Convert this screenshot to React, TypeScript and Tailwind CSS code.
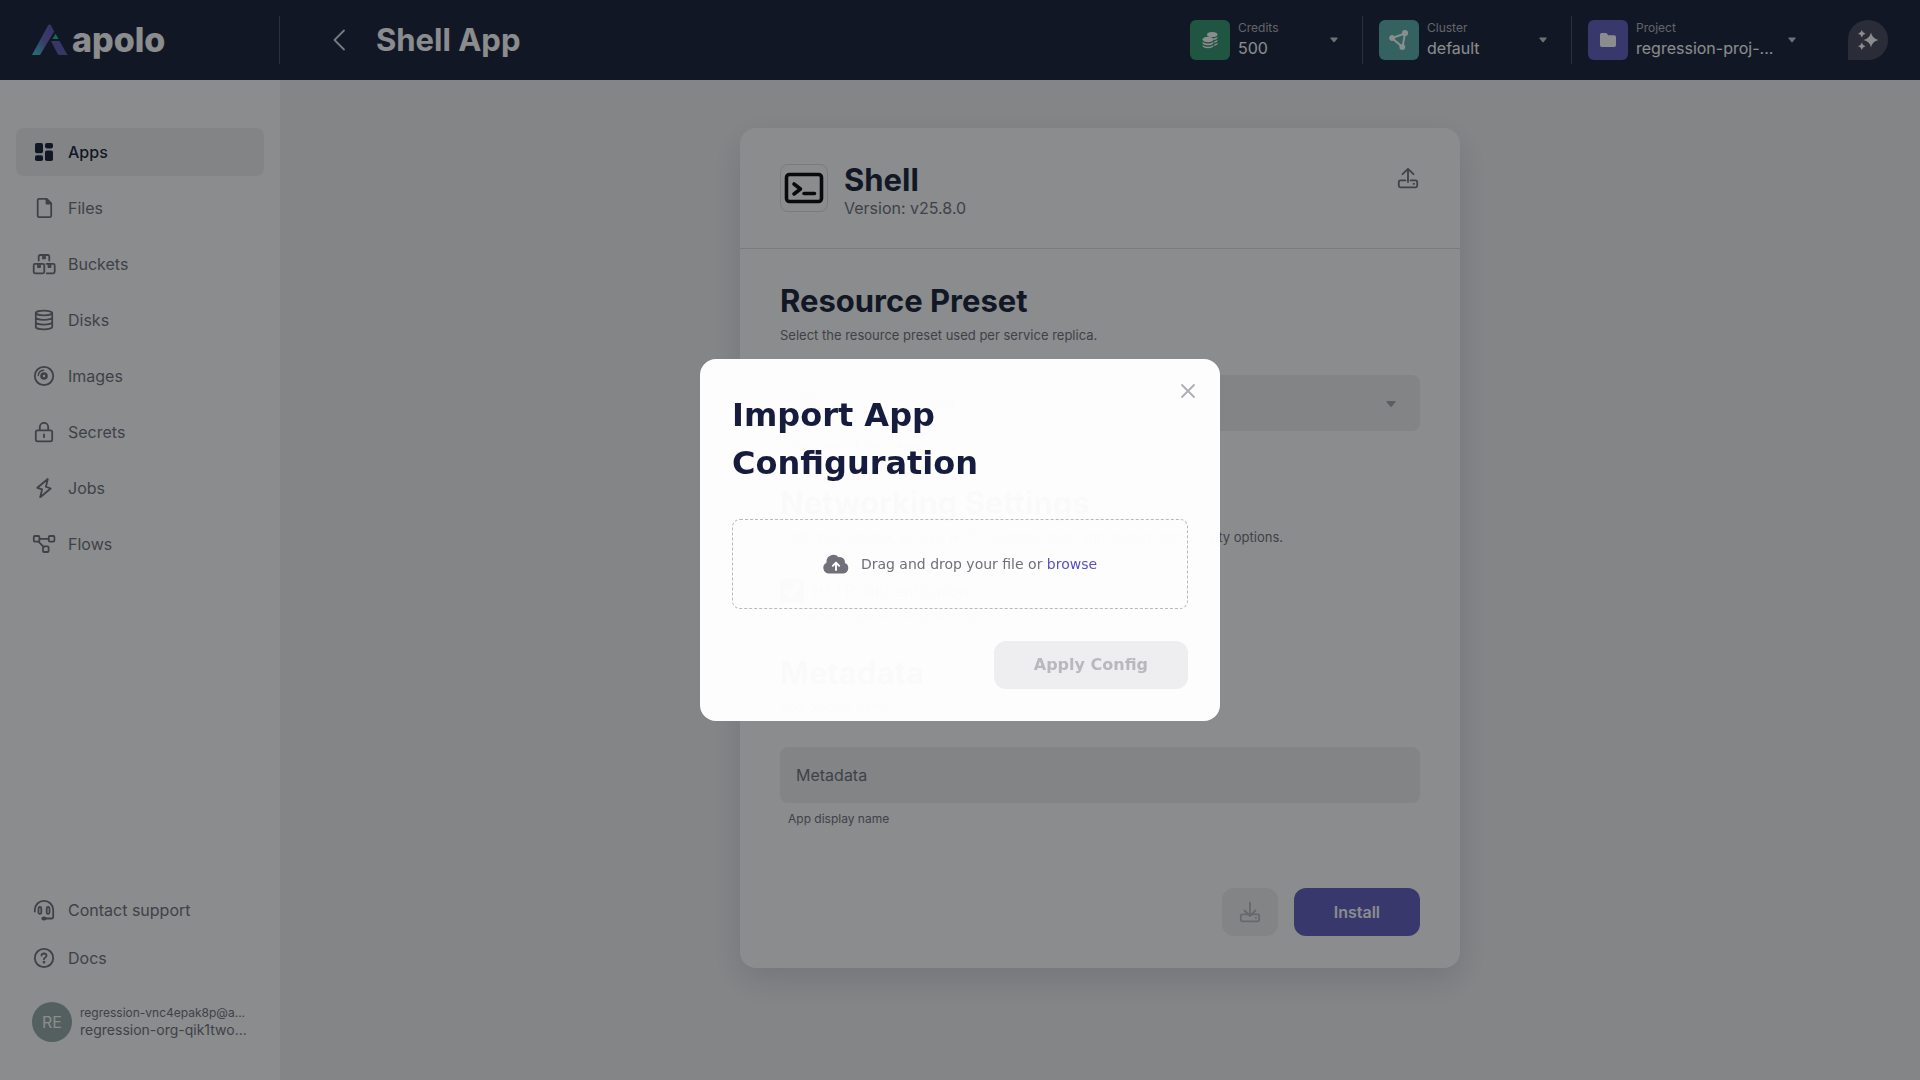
import { ReactNode } from "react";

const stroke = {
  fill: "none",
  stroke: "currentColor",
  strokeWidth: 1.8,
  strokeLinecap: "round" as const,
  strokeLinejoin: "round" as const,
};

function Icon({ children, className = "size-6" }: { children: ReactNode; className?: string }) {
  return (
    <svg viewBox="0 0 24 24" className={`${className} shrink-0`} aria-hidden="true">
      {children}
    </svg>
  );
}

function LogoMark() {
  return (
    <svg viewBox="0 0 36 32" className="h-8 w-9 shrink-0" aria-hidden="true">
      <defs>
        <linearGradient id="logo-left" x1="0.1" y1="1" x2="0.8" y2="0.1">
          <stop offset="0" stopColor="#3fc6cf" />
          <stop offset="0.55" stopColor="#6263b4" />
          <stop offset="1" stopColor="#5f55b4" />
        </linearGradient>
      </defs>
      <path d="M0 31 16 1.6q1.5-2.4 3 0L22.200 7.400 8 31Z" fill="url(#logo-left)" />
      <path d="M19 17h8.500L35.500 31H27.500q-1.300 0-2-1.200Z" fill="#5f55b4" />
      <path d="M23.600 9.800 26.600 15H20.400Z" fill="#17c289" />
    </svg>
  );
}

const nav = [
  {
    label: "Apps",
    icon: (
      <g fill="currentColor">
        <rect x="3" y="3" width="8" height="10.300" rx="1.800" />
        <rect x="3" y="15.200" width="8" height="5.800" rx="1.800" />
        <rect x="13" y="3" width="8" height="5.400" rx="1.800" />
        <rect x="13" y="10.600" width="8" height="10.400" rx="1.800" />
      </g>
    ),
  },
  {
    label: "Files",
    icon: (
      <g {...stroke}>
        <path d="M7.200 2.800h7.300l4.700 4.700v12.200a1.500 1.500 0 0 1-1.500 1.500H7.200a1.500 1.500 0 0 1-1.500-1.500V4.300a1.500 1.500 0 0 1 1.500-1.500Z" />
        <path d="M14.500 3v4.500H19Z" fill="currentColor" />
      </g>
    ),
  },
  {
    label: "Buckets",
    icon: (
      <g {...stroke}>
        <path d="M6.700 8.500V4.500a1.500 1.500 0 0 1 1.500-1.500h7.600a1.500 1.500 0 0 1 1.500 1.500v4M11 3.200v3.200h2V3.200" />
        <rect x="1.700" y="11.800" width="10.600" height="9.500" rx="1.500" />
        <path d="M6 12v3h2V12M14.500 11.800h6.700a1.500 1.500 0 0 1 1.500 1.500v6.500a1.500 1.500 0 0 1-1.500 1.500h-6.500M16.500 12v3h2V12" />
      </g>
    ),
  },
  {
    label: "Disks",
    icon: (
      <g {...stroke}>
        <ellipse cx="12" cy="5" rx="8.200" ry="2.300" />
        <path d="M3.800 5v14c0 1.300 3.700 2.300 8.200 2.300s8.200-1 8.200-2.300V5M3.800 9.600c0 1.300 3.700 2.300 8.200 2.300s8.200-1 8.200-2.300M3.800 14.300c0 1.300 3.700 2.300 8.200 2.300s8.200-1 8.200-2.300" />
      </g>
    ),
  },
  {
    label: "Images",
    icon: (
      <g {...stroke}>
        <circle cx="12" cy="12" r="9.200" />
        <circle cx="12" cy="12" r="2.500" strokeWidth="2.600" />
        <path d="M6.300 11.500a5.700 5.700 0 0 1 5.200-5.200" strokeWidth="1.400" />
      </g>
    ),
  },
  {
    label: "Secrets",
    icon: (
      <g {...stroke}>
        <rect x="3.800" y="10.300" width="16.400" height="11" rx="1.800" />
        <path d="M7.800 10V7a4.200 4.200 0 0 1 8.400 0v3M12 14.500v2.700" />
      </g>
    ),
  },
  {
    label: "Jobs",
    icon: <path {...stroke} d="M15.800 3 5.300 11.800l4.800 1.600L8.200 21.200l10.500-8.700-4.800-1.800Z" />,
  },
  {
    label: "Flows",
    icon: (
      <g {...stroke}>
        <rect x="1.800" y="4" width="5.600" height="5.600" rx="1" />
        <rect x="16.800" y="4" width="5.600" height="5.600" rx="1" />
        <rect x="11" y="14.400" width="5.600" height="5.600" rx="1" />
        <path d="M7.500 6.800h9.200M6.500 9.600l5.300 5.500" />
      </g>
    ),
  },
];

function NavItem({ label, icon, active }: { label: string; icon: ReactNode; active?: boolean }) {
  return (
    <a
      href="#"
      className={
        active
          ? "flex h-12 items-center gap-3 rounded-lg bg-[#f0f0f2] px-4 font-medium text-[#151b35]"
          : "flex h-12 items-center gap-3 rounded-lg px-4 text-[#6e6d78]"
      }
    >
      <Icon>{icon}</Icon>
      {label}
    </a>
  );
}

function Caret({ className }: { className: string }) {
  return (
    <svg viewBox="0 0 10 6" className={className} aria-hidden="true">
      <path d="M1.200 0h7.600q1.200.2.500 1.200L5.800 5.500q-.8.800-1.600 0L.700 1.200Q0 .2 1.200 0Z" fill="currentColor" />
    </svg>
  );
}

function HeaderPicker(props: { label: string; value: string; tile: string; width: string; icon: ReactNode }) {
  return (
    <button type="button" className={`${props.width} flex h-12 items-center gap-2 text-left`}>
      <span className={`${props.tile} flex size-10 shrink-0 items-center justify-center rounded-md text-white`}>
        <Icon>{props.icon}</Icon>
      </span>
      <span className="flex-1 whitespace-nowrap">
        <span className="block text-[12px] leading-4 text-[#b1b1b8]">{props.label}</span>
        <span className="block text-[16px] leading-6 text-white">{props.value}</span>
      </span>
      <Caret className="mr-2 h-[6px] w-2 shrink-0 text-[#c9c9ce]" />
    </button>
  );
}

function Header() {
  return (
    <header className="flex h-20 shrink-0 items-center bg-[#151b35]">
      <div className="flex h-12 w-[280px] shrink-0 items-center border-r border-[#4a4d62] pl-8">
        <a href="#" aria-label="apolo" className="flex items-center gap-1">
          <LogoMark />
          <span className="text-[34px] leading-10 font-extrabold text-white">apolo</span>
        </a>
      </div>
      <button type="button" aria-label="Back" className="ml-12 text-[#dcdce0]">
        <Icon>
          <path d="M16 2.500 6.500 12 16 21.500" {...stroke} />
        </Icon>
      </button>
      <h1 className="ml-6 text-[31px] leading-10 font-bold text-white">Shell App</h1>
      <div className="ml-auto flex items-center gap-4 pr-8">
        <HeaderPicker
          label="Credits"
          value="500"
          tile="bg-[#2f936c]"
          width="w-[156px]"
          icon={
            <g fill="currentColor">
              <ellipse cx="14.200" cy="6.500" rx="5.200" ry="2.600" />
              <path d="M15.500 10.300c2-.2 3.500-.9 4-1.600v1c0 1.200-1.600 2-4 2.200ZM16.300 13.200c1.600-.3 2.800-.9 3.200-1.500v1c0 1-1.300 1.800-3.200 2.100ZM16.300 16.200c1.600-.3 2.800-.9 3.200-1.500v1c0 1-1.300 1.800-3.200 2.100Z" />
              <ellipse cx="10" cy="11.500" rx="5.500" ry="2.800" />
              <path d="M4.500 13.500c1 1.500 3 2 5.500 2s4.500-.5 5.500-2v1.200c0 1.500-2.300 2.600-5.500 2.600s-5.500-1.100-5.500-2.600ZM4.500 16.700c1 1.500 3 2 5.500 2s4.500-.5 5.500-2v1c0 1.500-2.300 2.500-5.500 2.500s-5.500-1-5.500-2.500Z" />
            </g>
          }
        />
        <div className="h-12 w-px bg-[#4a4d62]" />
        <HeaderPicker
          label="Cluster"
          value="default"
          tile="bg-[#56acaa]"
          width="w-[176px]"
          icon={
            <g fill="currentColor" stroke="currentColor" strokeWidth="1.800">
              <path d="M5 10 18 5.500 15.500 19Z" fill="none" strokeWidth="2" />
              <circle cx="5" cy="10" r="2" />
              <circle cx="18" cy="5" r="2.200" />
              <circle cx="15.300" cy="19" r="2" />
            </g>
          }
        />
        <div className="h-12 w-px bg-[#4a4d62]" />
        <HeaderPicker
          label="Project"
          value="regression-proj-..."
          tile="bg-[#605bbe]"
          width="w-[216px]"
          icon={
            <path
              d="M5.500 5h4.200q.7 0 1.200.6l1.300 1.600h6q1.800 0 1.800 1.800v8.200q0 1.800-1.800 1.800H5.800Q4 19 4 17.200V6.500Q4 5 5.500 5Z"
              fill="currentColor"
            />
          }
        />
        <button
          type="button"
          aria-label="Assistant"
          className="ml-7 flex size-10 items-center justify-center rounded-full rounded-bl-sm bg-[#444659] text-white"
        >
          <Icon>
            <path
              fill="currentColor"
              d="M15 4.500q1.300 6.200 7.500 7.500-6.200 1.300-7.500 7.500-1.300-6.200-7.500-7.500 6.200-1.300 7.500-7.500ZM5.800 2q.7 3 3.700 3.700-3 .7-3.700 3.700-.7-3-3.700-3.700Q5.100 5 5.800 2ZM5.800 14.600q.7 3 3.700 3.700-3 .7-3.700 3.700-.7-3-3.700-3.700 3-.7 3.700-3.700Z"
            />
          </Icon>
        </button>
      </div>
    </header>
  );
}

function Sidebar() {
  return (
    <aside className="flex w-[280px] shrink-0 flex-col bg-white px-4 pt-12 pb-[38px]">
      <nav className="flex flex-col gap-2">
        {nav.map((item) => (
          <NavItem key={item.label} label={item.label} icon={item.icon} active={item.label === "Apps"} />
        ))}
      </nav>
      <div className="mt-auto">
        <NavItem
          label="Contact support"
          icon={
            <g {...stroke}>
              <path d="M2.800 13.500V12a9.200 9.200 0 0 1 18.400 0v7a1.500 1.500 0 0 1-1.500 1.500H13" />
              <rect x="6.500" y="9" width="2.800" height="6.800" rx="1.400" />
              <rect x="14.700" y="9" width="2.800" height="6.800" rx="1.400" />
              <ellipse cx="12" cy="20.500" rx="1.800" ry="1" fill="currentColor" />
            </g>
          }
        />
        <NavItem
          label="Docs"
          icon={
            <g {...stroke}>
              <circle cx="12" cy="12" r="9.200" />
              <path d="M9.500 9.500q.2-2 2.500-2t2.500 2q0 1.300-1.300 2-1.200.6-1.200 1.700" />
              <circle cx="12" cy="16.200" r=".5" fill="currentColor" />
            </g>
          }
        />
        <button type="button" className="mt-5 flex w-full items-center gap-2 px-4 text-left text-[#6e6d78]">
          <span className="flex size-10 shrink-0 items-center justify-center rounded-full bg-[#93a9a5] text-[16px] text-white">
            RE
          </span>
          <span className="whitespace-nowrap">
            <span className="block text-[12px] leading-4">regression-vnc4epak8p@a...</span>
            <span className="block text-[14px] leading-[18px]">regression-org-qik1two...</span>
          </span>
        </button>
      </div>
    </aside>
  );
}

function TrayIcon({ down }: { down?: boolean }) {
  return (
    <Icon>
      <g {...stroke}>
        <path d="M9.500 14.300H4.300a1.500 1.500 0 0 0-1.500 1.500v4a1.500 1.500 0 0 0 1.500 1.500h15.400a1.500 1.500 0 0 0 1.500-1.500v-4a1.500 1.500 0 0 0-1.500-1.500h-5.200" />
        <path d={down ? "M12 2.500v13M6.500 10.500 12 16l5.500-5.500" : "M12 16V3M6.500 8.200 12 2.800l5.500 5.400"} />
        <path d="M17.500 17.800h.6" />
      </g>
    </Icon>
  );
}

const h2 = "text-[31px] leading-10 font-bold text-[#151b35]";
const note = "text-[13px] leading-5";

function AppForm() {
  return (
    <form className="w-full max-w-[720px] rounded-2xl bg-white text-[#6e6d78] shadow-[0_12px_32px_rgba(21,27,53,0.14)]">
      <div className="flex items-start gap-4 border-b border-[#dedee2] px-10 py-8">
        <div className="mt-1 flex size-12 items-center justify-center rounded-lg border border-[#dedee2] text-black">
          <svg viewBox="0 0 46 46" className="size-[46px]" aria-hidden="true">
            <g fill="none" stroke="currentColor" strokeWidth="3.600" strokeLinecap="round" strokeLinejoin="round">
              <rect x="5.500" y="9.500" width="35" height="27" rx="3" />
              <path d="M13 19l6.500 5L13 29M23 28.500h10.500" />
            </g>
          </svg>
        </div>
        <div>
          <h2 className={h2}>Shell</h2>
          <p className="text-[16px] leading-4">Version: v25.8.0</p>
        </div>
        <button type="button" aria-label="Import configuration" className="mt-1.5 ml-auto">
          <TrayIcon />
        </button>
      </div>

      <div className="p-10 pt-8 pb-8">
        <section>
          <h2 className={h2}>Resource Preset</h2>
          <p className={`${note} mt-1`}>Select the resource preset used per service replica.</p>
          <div className="relative mt-[30px]">
            <span className="absolute top-4 left-4 text-[#a5a5ad]">
              <Icon>
                <g {...stroke}>
                  <rect x="4.500" y="4.500" width="15" height="15" rx="2" />
                  <rect x="8.500" y="8.500" width="7" height="7" rx="1" />
                  <path d="M8 4V2M12 4V2M16 4V2M8 22v-2M12 22v-2M16 22v-2M4 8H2M4 12H2M4 16H2M22 8h-2M22 12h-2M22 16h-2" />
                </g>
              </Icon>
            </span>
            <select
              aria-label="Resource Preset"
              className="h-14 w-full appearance-none rounded-lg bg-[#f0f0f2] pr-12 pl-[52px] text-[16px] text-[#a5a5ad]"
            >
              <option>Resource Preset*</option>
            </select>
            <Caret className="absolute top-[26px] right-6 h-[6px] w-[10px] text-[#a5a5ad]" />
          </div>
          <p className="mt-1.5 pl-2 text-[12px] leading-5">The name of the preset.</p>
        </section>

        <section className="mt-[26px]">
          <h2 className={h2}>Networking Settings</h2>
          <p className={`${note} mt-1`}>
            Configure network access, HTTP authentication, and related connectivity options.
          </p>
          <label className="mt-8 flex items-center gap-2 text-[16px] leading-6">
            <input type="checkbox" defaultChecked className="size-6 accent-[#605bbe]" />
            HTTP Authentication
          </label>
          <p className="mt-1 pl-2 text-[12px] leading-5">Whether to use HTTP authentication.</p>
        </section>

        <section className="mt-[26px]">
          <h2 className={h2}>Metadata</h2>
          <p className={`${note} mt-1`}>App display name</p>
          <input
            aria-label="Metadata"
            placeholder="Metadata"
            className="mt-[30px] block h-14 w-full rounded-lg bg-[#f0f0f2] px-4 text-[16px] placeholder:text-[#6e6d78]"
          />
          <p className="mt-1.5 pl-2 text-[12px] leading-5">App display name</p>
        </section>

        <div className="mt-[59px] flex justify-end gap-4">
          <button
            type="button"
            disabled
            aria-label="Export configuration"
            className="flex h-12 w-14 items-center justify-center rounded-xl bg-[#f0f0f2] text-[#b8b8be]"
          >
            <TrayIcon down />
          </button>
          <button type="submit" className="h-12 rounded-xl bg-[#605bbe] px-10 text-[16px] font-semibold text-white">
            Install
          </button>
        </div>
      </div>
    </form>
  );
}

function ImportDialog() {
  return (
    <div className="fixed inset-0 flex items-center justify-center bg-[#101417]/49">
      <div
        role="dialog"
        aria-modal="true"
        aria-labelledby="import-title"
        className="relative w-full max-w-[520px] rounded-2xl bg-white/98 p-8 font-['DejaVu_Sans',sans-serif]"
      >
        <button type="button" aria-label="Close" className="absolute top-5 right-5 text-[#adadb4]">
          <Icon>
            <path d="m6 6 12 12M18 6 6 18" {...stroke} />
          </Icon>
        </button>
        <h2 id="import-title" className="text-[32px] leading-[48px] font-bold text-[#161c3d]">
          Import App Configuration
        </h2>
        <label className="mt-8 flex h-[90px] cursor-pointer items-center justify-center gap-3 rounded-lg border border-dashed border-[#b8b8be] text-[14px] text-[#706f7a]">
          <input type="file" className="sr-only" />
          <svg viewBox="0 0 26 20" className="h-5 w-[26px]" aria-hidden="true">
            <path
              d="M6 19.500a5.700 5.700 0 0 1-2.500-10.800A7 7 0 0 1 15.600 3.200a5 5 0 0 1 6.200 5.900A5.400 5.400 0 0 1 20.500 19.500Z"
              fill="currentColor"
            />
            <path
              d="M13 16V9.200M9.800 11.800 13 8.600l3.200 3.200"
              fill="none"
              stroke="#fff"
              strokeWidth="1.900"
              strokeLinecap="round"
              strokeLinejoin="round"
            />
          </svg>
          <span>
            Drag and drop your file or <span className="text-[#5550c8]">browse</span>
          </span>
        </label>
        <div className="mt-8 flex justify-end">
          <button
            type="button"
            disabled
            className="h-12 rounded-xl bg-[#eeeef0] px-10 text-[16px] font-bold text-[#b8b8be]"
          >
            Apply Config
          </button>
        </div>
      </div>
    </div>
  );
}

export default function App() {
  return (
    <div className="flex min-h-screen flex-col font-['Inter',sans-serif] text-[16px]">
      <Header />
      <div className="flex flex-1">
        <Sidebar />
        <main className="flex flex-1 items-start justify-center bg-[#f2f2f4] px-6 pt-12 pb-12">
          <AppForm />
        </main>
      </div>
      <ImportDialog />
    </div>
  );
}
